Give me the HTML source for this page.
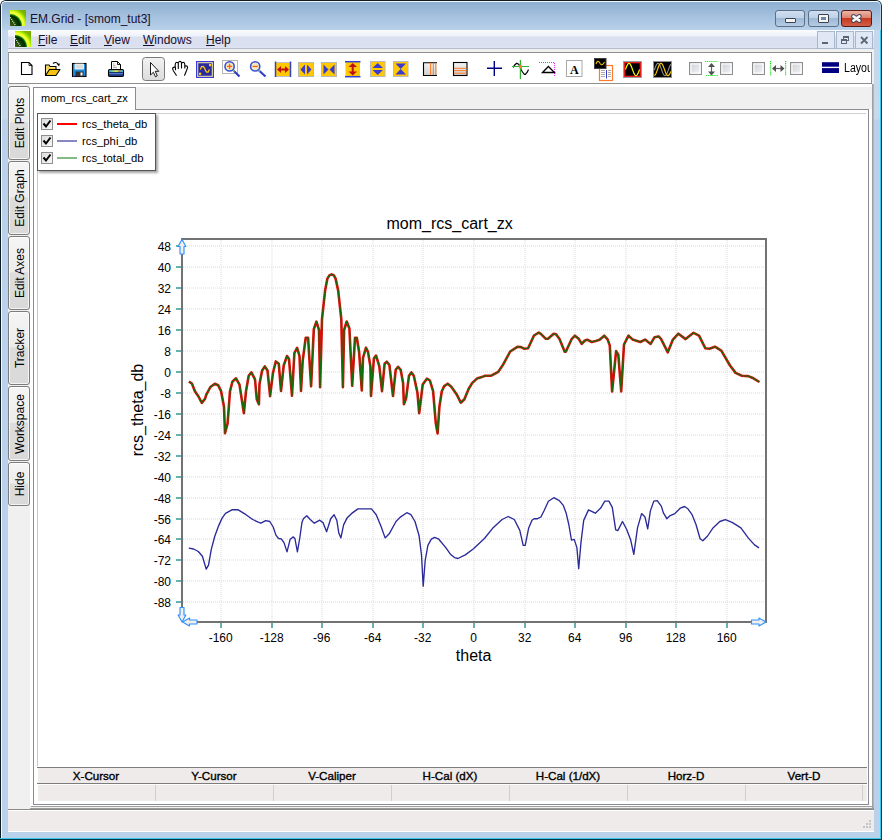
<!DOCTYPE html>
<html><head><meta charset="utf-8"><title>EM.Grid</title>
<style>
*{margin:0;padding:0;box-sizing:border-box}
html,body{width:882px;height:840px;overflow:hidden;background:#fff;font-family:"Liberation Sans",sans-serif}
.a{position:absolute}
.t{position:absolute;white-space:nowrap;line-height:1}
.vt{position:absolute;left:8px;width:22px;border:1px solid #7c7c7c;border-radius:3px;background:linear-gradient(#f5f5f5 0,#ececec 48%,#dddddd 50%,#d9d9d9 100%);box-shadow:inset 0 0 0 1px rgba(255,255,255,0.7)}
.vt span{position:absolute;left:calc(50% + 0.5px);top:50%;transform:translate(-50%,-50%) rotate(-90deg);font-size:12px;color:#000;white-space:nowrap;line-height:1}
.chk{position:absolute;width:12px;height:12px;border:1px solid #8e8f8f;background:linear-gradient(135deg,#dcdcdc,#f8f8f8)}
.tb{position:absolute;top:0}
.hd{position:absolute;top:768.9px;height:13px;width:118px;text-align:center;font-size:11.6px;font-weight:normal;line-height:13px;color:#000;-webkit-text-stroke:0.35px #000}
</style></head><body>

<!-- window frame -->
<div class="a" style="left:0;top:0;width:882px;height:840px;background:#b9d1ea;border:1px solid #101c24;border-right-color:#0a3a4a;border-bottom-color:#0a3a4a;border-radius:6px 6px 0 0"></div>
<div class="a" style="left:1px;top:1px;width:880px;height:838px;border:1px solid #f4f8fc;border-right:0;border-bottom:0;border-radius:5px 5px 0 0"></div>
<div class="a" style="left:2px;top:2px;width:878px;height:28px;background:linear-gradient(#8fb0d1,#b9d1ea);border-radius:4px 4px 0 0"></div>
<div class="a" style="left:2px;top:30px;width:6px;height:802px;background:linear-gradient(#c4d8ed 0,#c6daee 88px,#b9d1ea 91px,#b9d1ea 100%)"></div>
<div class="a" style="left:874px;top:30px;width:6px;height:802px;background:linear-gradient(#c4d8ed 0,#c6daee 88px,#b9d1ea 91px,#b9d1ea 100%)"></div>
<!-- title -->
<div class="a" style="left:10px;top:10px;width:16px;height:16px;background:radial-gradient(circle farthest-corner at 0% 100%,#4a6010 0,#1a4a00 25%,#002a00 44%,#0a7a0a 50%,#e8ff40 55%,#f8ff30 62%,#b0f000 70%,#80b800 80%,#78a800 100%)"></div>
<svg class="a" style="left:0;top:0" width="40" height="50" viewBox="0 0 40 50"><path d="M10.3 17.3 L15.6 25.6" stroke="#f4f4f4" stroke-width="1.1" stroke-dasharray="1.1 0.9" fill="none"/></svg>
<div class="t" style="left:30px;top:13px;font-size:12px;color:#1a0f2e">EM.Grid - [smom_tut3]</div>
<!-- caption buttons -->
<div class="a" style="left:775px;top:10px;width:30px;height:17px;border:1px solid #5d6f86;border-radius:3px;background:linear-gradient(#d1e0f0 0,#bdd1e8 45%,#9fb9d6 50%,#b4cbe3 100%)"></div>
<div class="a" style="left:785px;top:18px;width:11px;height:5px;border:1px solid #3a4350;background:#f4f4f4;border-radius:1px"></div>
<div class="a" style="left:808px;top:10px;width:31px;height:17px;border:1px solid #5d6f86;border-radius:3px;background:linear-gradient(#d1e0f0 0,#bdd1e8 45%,#9fb9d6 50%,#b4cbe3 100%)"></div>
<div class="a" style="left:818px;top:14px;width:11px;height:9px;border:1px solid #3a4350;background:#f4f4f4;border-radius:1px"></div>
<div class="a" style="left:821px;top:17px;width:5px;height:3px;background:#6f86a6"></div>
<div class="a" style="left:841px;top:10px;width:31px;height:17px;border:1px solid #5a1a16;border-radius:3px;background:linear-gradient(#eab5a8 0,#dc8470 45%,#c73a1f 50%,#d06048 100%)"></div>
<svg class="a" style="left:849px;top:12px" width="15" height="13" viewBox="0 0 15 13"><path d="M4.4 4.4 L10.4 8.6 M10.4 4.4 L4.4 8.6" stroke="#3c4454" stroke-width="4.6" stroke-linecap="round"/><path d="M4.4 4.4 L10.4 8.6 M10.4 4.4 L4.4 8.6" stroke="#f6f6f6" stroke-width="2.6" stroke-linecap="round"/></svg>
<!-- client bg -->
<div class="a" style="left:8px;top:30px;width:866px;height:802px;background:#f0f0f0"></div>
<!-- menubar -->
<div class="a" style="left:8px;top:30px;width:866px;height:19px;background:linear-gradient(#fcfcfe 0,#eef1f9 6px,#dbe0f0 7px,#dbe0f0 16px,#e0e5f4 18px);border-bottom:1px solid #b7bccb"></div>
<div class="a" style="left:14px;top:31px;width:1px;height:16px;background:#fbfbff"></div>
<div class="a" style="left:15px;top:31px;width:16px;height:16px;background:radial-gradient(circle farthest-corner at 0% 100%,#4a6010 0,#1a4a00 25%,#002a00 44%,#0a7a0a 50%,#e8ff40 55%,#f8ff30 62%,#b0f000 70%,#80b800 80%,#78a800 100%)"></div>
<svg class="a" style="left:0;top:0" width="40" height="50" viewBox="0 0 40 50"><path d="M15.3 38.3 L20.6 46.6" stroke="#f4f4f4" stroke-width="1.1" stroke-dasharray="1.1 0.9" fill="none"/></svg>
<div class="t" style="left:38px;top:34px;font-size:12px;color:#1a0f2e"><u>F</u>ile</div>
<div class="t" style="left:70px;top:34px;font-size:12px;color:#1a0f2e"><u>E</u>dit</div>
<div class="t" style="left:104px;top:34px;font-size:12px;color:#1a0f2e"><u>V</u>iew</div>
<div class="t" style="left:143px;top:34px;font-size:12px;color:#1a0f2e"><u>W</u>indows</div>
<div class="t" style="left:206px;top:34px;font-size:12px;color:#1a0f2e"><u>H</u>elp</div>
<!-- mdi buttons -->
<div class="a" style="left:817px;top:31px;width:18px;height:18px;border:1px solid #a9b8cc;background:#dfe8f4"></div>
<div class="a" style="left:822px;top:42px;width:6px;height:2px;background:#5b6675"></div>
<div class="a" style="left:836px;top:31px;width:18px;height:18px;border:1px solid #a9b8cc;background:#dfe8f4"></div>
<div class="a" style="left:843px;top:36px;width:6px;height:5px;border:1px solid #5b6675;border-top-width:2px"></div>
<div class="a" style="left:841px;top:38.5px;width:6px;height:5.5px;border:1px solid #5b6675;border-top-width:2px;background:#dfe8f4"></div>
<div class="a" style="left:855px;top:31px;width:18px;height:18px;border:1px solid #a9b8cc;background:#dfe8f4"></div>
<svg class="a" style="left:859px;top:35px" width="10" height="10" viewBox="0 0 10 10"><path d="M2 2 L8.5 8.5 M8.5 2 L2 8.5" stroke="#5b6675" stroke-width="1.8"/></svg>
<!-- toolbar -->
<div class="a" style="left:8px;top:52px;width:864px;height:32px;background:#fff;border:1px solid #8f8f8f;border-left-color:#9a9a9a"></div>

<svg class="a" style="left:0;top:0" width="882" height="86" viewBox="0 0 882 86">
<defs>
<linearGradient id="cbg" x1="0" y1="0" x2="1" y2="1"><stop offset="0" stop-color="#c9ced6"/><stop offset="1" stop-color="#f6f6f6"/></linearGradient>
<linearGradient id="btg" x1="0" y1="0" x2="0" y2="1"><stop offset="0" stop-color="#f2f2f2"/><stop offset="1" stop-color="#dcdcdc"/></linearGradient>
<linearGradient id="lbg" x1="0" y1="0" x2="0" y2="1"><stop offset="0" stop-color="#f4f4f4"/><stop offset="1" stop-color="#cfcfcf"/></linearGradient>
</defs>
<!-- new doc -->
<path d="M21.5 62.5 H29 L32 65.5 V74.5 H21.5 Z" fill="#fff" stroke="#000" stroke-width="1.1"/>
<path d="M29 62.5 V65.5 H32" fill="none" stroke="#000" stroke-width="0.8"/>
<!-- open folder -->
<path d="M45.5 75.5 V65 H49 L50 66.5 H56 V69.5" fill="#fde890" stroke="#000" stroke-width="1.1"/>
<path d="M46.5 66.5 H49 L50 68 H55 V69.5 H46.5 Z" fill="#f8d040"/>
<path d="M45.5 75.5 H56 L60 69.5 H49.5 Z" fill="#f7c20f" stroke="#000" stroke-width="1.1" stroke-linejoin="round"/>
<path d="M53 63.5 Q56 61 58.5 64.5" fill="none" stroke="#000" stroke-width="1.1"/>
<path d="M57 64 L60 63.5 L59 66.5 Z" fill="#000"/>
<!-- save -->
<rect x="72.5" y="63.5" width="13.5" height="13" fill="#1d8fe0" stroke="#000" stroke-width="1.1"/>
<rect x="75" y="64" width="8.5" height="5" fill="#dcdcdc" stroke="#fff" stroke-width="0.8"/>
<rect x="75.5" y="71.5" width="8" height="5" fill="#333"/>
<rect x="80.5" y="72.5" width="2" height="3" fill="#fff"/>
<rect x="73" y="75" width="2" height="1.5" fill="#5050e0"/>
<!-- print -->
<path d="M111.5 61.5 H117.5 L120.5 64.5 V69.5 H111.5 Z" fill="#f8f8f8" stroke="#000" stroke-width="1"/>
<path d="M117.5 61.5 V64.5 H120.5" fill="none" stroke="#000" stroke-width="0.9"/>
<path d="M113 64 H114.5 M113 65.8 H115.5 M113 67.6 H117" stroke="#909090" stroke-width="0.8"/>
<rect x="108.5" y="69.5" width="15" height="7" rx="1.2" fill="#2a50c0" stroke="#000" stroke-width="1.1"/>
<linearGradient id="prg" x1="0" y1="0" x2="1" y2="0"><stop offset="0" stop-color="#20b0f0"/><stop offset="0.5" stop-color="#d8e838"/><stop offset="1" stop-color="#20c0f0"/></linearGradient>
<rect x="109.2" y="70.2" width="13.6" height="1.9" fill="url(#prg)"/>
<rect x="109.2" y="72.1" width="13.6" height="0.8" fill="#102040"/>
<rect x="109.2" y="72.9" width="13.6" height="1.7" fill="#4a78d8"/>
<rect x="109.2" y="74.6" width="13.6" height="0.8" fill="#101830"/>
<rect x="118.5" y="70.4" width="2" height="1.3" fill="#ff3030"/>
<!-- pointer button -->
<rect x="142.5" y="57.5" width="22" height="23" rx="3" fill="url(#btg)" stroke="#7a7a7a" stroke-width="1"/>
<path d="M150.5 62.5 V75 L153.3 72.3 L155.5 76.8 L157.3 75.8 L155.2 71.3 H158.8 Z" fill="#fff" stroke="#000" stroke-width="0.9" stroke-linejoin="miter"/>
<!-- hand -->
<path d="M176.3 75.3 L173.5 71 Q172 68.5 173.2 67.5 Q174.5 66.8 175.5 67.5 V69.8 M175.2 67.5 V64.5 Q175.3 62.3 176.8 62.3 Q178.3 62.5 178.3 64 V68.5 M178.3 63.5 Q178.5 61.3 180 61.3 Q181.5 61.5 181.5 63.5 V68 M181.5 64 Q181.8 62.2 183.2 62.2 Q184.8 62.4 184.8 64.5 V68 M185 66 Q187.3 65.6 187.6 67 Q187.5 68.5 186.5 70.5 L185.5 73 L184.6 75.3" fill="none" stroke="#000" stroke-width="1.1" stroke-linecap="round" stroke-linejoin="round"/>
<!-- wave box -->
<rect x="196.5" y="61.5" width="17" height="16" fill="#2a2a9e" stroke="#3a3ad8" stroke-width="1"/>
<rect x="197.7" y="62.7" width="14.6" height="13.6" fill="none" stroke="#efe2a8" stroke-width="1.1"/>
<polyline points="200.3,69.5 201.6,66.6 203.2,66.4 204.5,67.8 205.5,70.6 206.6,72.1 208.1,72.1 209.4,69.5" fill="none" stroke="#ffd000" stroke-width="1.2"/>
<rect x="199" y="72.7" width="2.2" height="2.2" fill="#ffd800"/>
<rect x="209" y="64" width="2.2" height="2.2" fill="#ffd800"/>
<!-- zoom in -->
<rect x="222.5" y="60.5" width="15" height="13" fill="none" stroke="#b5b5b5" stroke-width="1"/>
<line x1="233.5" y1="70.5" x2="239.5" y2="76.5" stroke="#3040c0" stroke-width="2.2"/>
<line x1="232.5" y1="69.5" x2="234.5" y2="71.5" stroke="#a0d040" stroke-width="1.5"/>
<circle cx="229.6" cy="66.4" r="4.6" fill="#f3e8c0" stroke="#3a50d8" stroke-width="1.6"/>
<path d="M229.6 63.8 V69 M227 66.4 H232.2" stroke="#ff6010" stroke-width="1.3"/>
<!-- zoom out -->
<line x1="259" y1="70.5" x2="265.5" y2="76.5" stroke="#3040c0" stroke-width="2.2"/>
<line x1="258.2" y1="69.5" x2="260" y2="71.3" stroke="#a0d040" stroke-width="1.5"/>
<circle cx="255.2" cy="66.4" r="4.6" fill="#f3e8c0" stroke="#3a50d8" stroke-width="1.6"/>
<path d="M252.6 66.4 H257.8" stroke="#ff6010" stroke-width="1.3"/>
<!-- yellow box 1 -->
<rect x="275.5" y="62.5" width="15" height="14" fill="#ffc800" stroke="#c0c0c0" stroke-width="1"/>
<line x1="275.5" y1="61.5" x2="275.5" y2="77" stroke="#3040d0" stroke-width="1.5"/>
<line x1="290.5" y1="61.5" x2="290.5" y2="77" stroke="#3040d0" stroke-width="1.5"/>
<path d="M277 69.5 L281 66 V68.5 H285 V66 L289 69.5 L285 73 V70.5 H281 V73 Z" fill="#c01010"/>
<!-- box 2 -->
<rect x="298.5" y="62.5" width="15" height="14" fill="#ffc800" stroke="#b8b8b8" stroke-width="1"/>
<path d="M305 64.5 L300.5 69.5 L305 74.5 Z M307 64.5 L311.5 69.5 L307 74.5 Z" fill="#3a3ad0"/>
<!-- box 3 -->
<rect x="321.5" y="62.5" width="15" height="14" fill="#ffc800" stroke="#b8b8b8" stroke-width="1"/>
<path d="M323.5 64.5 L328.5 69.5 L323.5 74.5 Z M334.5 64.5 L329.5 69.5 L334.5 74.5 Z" fill="#3a3ad0"/>
<!-- box 4 -->
<rect x="345.5" y="62" width="14.5" height="14.5" fill="#ffc800"/>
<line x1="345" y1="61.7" x2="360.5" y2="61.7" stroke="#3040d0" stroke-width="1.5"/>
<line x1="345" y1="76.7" x2="360.5" y2="76.7" stroke="#3040d0" stroke-width="1.5"/>
<path d="M352.7 63 L357 67 H353.7 V71.5 H357 L352.7 75.5 L348.5 71.5 H351.7 V67 H348.5 Z" fill="#c01010"/>
<!-- box 5 -->
<rect x="370.5" y="61.5" width="14.5" height="15" fill="#ffc800" stroke="#b8b8b8" stroke-width="1"/>
<path d="M377.7 63 L383 68 H372.5 Z M372.5 70 H383 L377.7 75 Z" fill="#3a3ad0"/>
<!-- box 6 -->
<rect x="393.5" y="61.5" width="14.5" height="15" fill="#ffc800" stroke="#b8b8b8" stroke-width="1"/>
<path d="M395.5 63.5 H406 L400.7 69 L406 74.5 H395.5 L400.7 69 Z" fill="#3a3ad0"/>
<!-- vlines box -->
<rect x="423" y="62.5" width="14" height="13" fill="url(#lbg)"/>
<path d="M423 62.7 H437 M423 75.5 H437 M423.5 62.5 V76" stroke="#000" stroke-width="1.1" fill="none"/>
<path d="M430.6 63 V75 M433.3 63 V75 M435.8 63 V75" stroke="#ff7a20" stroke-width="1"/>
<!-- hlines box -->
<rect x="453.5" y="62.5" width="13.5" height="13" fill="url(#lbg)" stroke="#000" stroke-width="1.1"/>
<path d="M454 68.3 H466.5 M454 70.6 H466.5 M454 73.2 H466.5" stroke="#ff7a20" stroke-width="1"/>
<!-- crosshair -->
<path d="M494.3 61 V76 M487 68.3 H502" stroke="#000080" stroke-width="1.4"/>
<!-- green cursor -->
<polyline points="513.3,67.6 514.5,65.2 516.6,63.3 518.6,64.3 519.6,65.9 520.4,67.5 521.3,70 522.5,72 524.4,74.4 525.4,74.4 527.4,72 528.5,69.6" fill="none" stroke="#000" stroke-width="1.2"/>
<path d="M520.4 60 V79 M512 66.5 H529" stroke="#30b030" stroke-width="1.2"/>
<rect x="519" y="65.2" width="3" height="3" fill="#ff8020"/>
<!-- triangle -->
<path d="M539 62.5 H554.5 V77" fill="none" stroke="#ff20ff" stroke-width="1" stroke-dasharray="1 1" shape-rendering="crispEdges"/>
<path d="M542.5 72.5 L548.4 66.5 L554.5 72.5 Z" fill="#fff" stroke="#000" stroke-width="1.3" stroke-linejoin="miter"/>
<!-- A box -->
<rect x="566.5" y="60.5" width="15.5" height="16" fill="#fff" stroke="#a8a8a8" stroke-width="1"/>
<text x="574.3" y="73.5" font-family="Liberation Serif" font-weight="bold" font-size="12" text-anchor="middle" fill="#000">A</text>
<!-- doc wave -->
<rect x="599.5" y="65.5" width="13" height="15" fill="#fff" stroke="#ff7a30" stroke-width="1.2"/>
<path d="M601 70.5 H605 M601 72.5 H605 M601 74.5 H605 M601 76.5 H605 M608 70.5 H611 M608 72.5 H611 M608 74.5 H611 M608 76.5 H611" stroke="#a8a8a8" stroke-width="1" shape-rendering="crispEdges"/>
<line x1="606.5" y1="70" x2="606.5" y2="78.5" stroke="#3a3ad0" stroke-width="1"/>
<rect x="594.5" y="58.5" width="11.5" height="10" fill="#000" stroke="#404040" stroke-width="1"/>
<path d="M596 64 Q597.5 59.5 599.5 62.5 Q601.5 66.5 603.5 63.5 L604.5 62" fill="none" stroke="#f0c000" stroke-width="1.1"/>
<!-- red wave -->
<rect x="623.5" y="61.5" width="18" height="16" fill="#000" stroke="#98a0a0" stroke-width="1"/>
<rect x="624.7" y="62.7" width="15.6" height="13.6" fill="none" stroke="#ff2020" stroke-width="1.2"/>
<polyline points="625.5,69.5 626.0,68.1 626.5,66.8 627.0,65.6 627.5,64.7 628.0,63.9 628.5,63.5 629.0,63.3 629.5,63.5 630.0,63.9 630.5,64.7 631.0,65.6 631.5,66.8 632.0,68.1 632.5,69.5 633.0,70.9 633.5,72.2 634.0,73.4 634.5,74.3 635.0,75.1 635.5,75.5 636.0,75.7 636.5,75.5 637.0,75.1 637.5,74.3 638.0,73.4 638.5,72.2 639.0,70.9 639.5,69.5" fill="none" stroke="#ffff00" stroke-width="1.2"/>
<!-- double wave -->
<rect x="653.5" y="61.5" width="18" height="16" fill="#000" stroke="#909090" stroke-width="1"/>
<polyline points="654.3,70.1 654.8,68.7 655.3,67.3 655.8,66.1 656.3,65.0 656.8,64.2 657.3,63.6 657.8,63.3 658.3,63.4 658.8,63.7 659.3,64.3 659.8,65.2 660.3,66.3 660.8,67.6 661.3,68.9 661.8,70.3 662.3,71.7 662.8,72.9 663.3,74.0 663.8,74.8 664.3,75.4 664.8,75.7 665.3,75.6 665.8,75.3 666.3,74.7 666.8,73.8 667.3,72.7 667.8,71.4 668.3,70.1 668.8,68.7 669.3,67.3 669.8,66.1 670.3,65.0 670.8,64.2" fill="none" stroke="#909090" stroke-width="1.1"/>
<polyline points="654.3,75.6 654.8,75.3 655.3,74.7 655.8,73.8 656.3,72.7 656.8,71.4 657.3,70.1 657.8,68.7 658.3,67.3 658.8,66.1 659.3,65.0 659.8,64.2 660.3,63.6 660.8,63.3 661.3,63.4 661.8,63.7 662.3,64.3 662.8,65.2 663.3,66.3 663.8,67.6 664.3,68.9 664.8,70.3 665.3,71.7 665.8,72.9 666.3,74.0 666.8,74.8 667.3,75.4 667.8,75.7 668.3,75.6 668.8,75.3 669.3,74.7 669.8,73.8 670.3,72.7 670.8,71.4" fill="none" stroke="#f8c800" stroke-width="1.2"/>
<!-- checkboxes -->
<g fill="url(#cbg)" stroke="#8e8e8e" stroke-width="1">
<rect x="689.5" y="62.5" width="12" height="12"/>
<rect x="720.5" y="62.5" width="12" height="12"/>
<rect x="752.5" y="62.5" width="12" height="12"/>
<rect x="790.5" y="62.5" width="12" height="12"/>
</g>
<g fill="none" stroke="#fff" stroke-width="1">
<rect x="691" y="64" width="9" height="9"/>
<rect x="722" y="64" width="9" height="9"/>
<rect x="754" y="64" width="9" height="9"/>
<rect x="792" y="64" width="9" height="9"/>
</g>
<!-- v arrow -->
<path d="M705 61.5 H718 M706 75.5 H718" stroke="#20e020" stroke-width="1.2" stroke-dasharray="1.2 0.9"/>
<path d="M711.5 64 V74.5" stroke="#606060" stroke-width="1.2"/>
<path d="M708 67 L711.5 63 L715 67 Z M708 71.5 L711.5 75.5 L715 71.5 Z" fill="#505050"/>
<!-- h arrow -->
<path d="M770.5 61 V76 M785.6 61 V76" stroke="#20e020" stroke-width="1.2" stroke-dasharray="1.2 0.9"/>
<path d="M773 68.5 H783.5" stroke="#606060" stroke-width="1.2"/>
<path d="M776 65 L772 68.5 L776 72 Z M780.5 65 L784.5 68.5 L780.5 72 Z" fill="#505050"/>
<!-- layout -->
<rect x="822" y="62.2" width="17" height="10.8" fill="#000080"/>
<rect x="822" y="66.7" width="17" height="1.4" fill="#fff"/>
</svg>
<div class="a" style="left:843.5px;top:61px;width:26.5px;height:16px;overflow:hidden"><div class="t" style="left:0;top:1.3px;font-size:12.3px;color:#000;transform:scaleX(0.86);transform-origin:0 0">Layout</div></div>

<!-- left tabs -->
<div class="vt" style="top:86px;height:74px"><span>Edit Plots</span></div>
<div class="vt" style="top:161px;height:74px"><span>Edit Graph</span></div>
<div class="vt" style="top:236px;height:74px"><span>Edit Axes</span></div>
<div class="vt" style="top:311px;height:74px"><span>Tracker</span></div>
<div class="vt" style="top:386px;height:75px"><span>Workspace</span></div>
<div class="vt" style="top:462px;height:44px"><span>Hide</span></div>
<!-- mdi area -->
<div class="a" style="left:30px;top:84px;width:842px;height:722px;background:#fff"></div>
<div class="a" style="left:872px;top:84px;width:1px;height:724px;background:#a0a0a0"></div>
<div class="a" style="left:873px;top:84px;width:1px;height:724px;background:#b4b4b4"></div>
<div class="a" style="left:31px;top:806px;width:843px;height:1px;background:#a0a0a0"></div>
<div class="a" style="left:8px;top:809px;width:866px;height:1px;background:#8a8a8a"></div>
<div class="a" style="left:30px;top:808px;width:844px;height:1px;background:#9a9a9a"></div>
<!-- tab strip -->
<div class="a" style="left:136px;top:87px;width:736px;height:22px;background:#f0f0f0"></div>
<div class="a" style="left:33px;top:87px;width:103px;height:23px;border:1px solid #898c95;border-bottom:0;background:#fff"></div>
<div class="t" style="left:41px;top:93px;font-size:11px;color:#000">mom_rcs_cart_zx</div>
<div class="a" style="left:33px;top:109px;width:836px;height:696px;border:1px solid #898c95;border-top:0"></div>
<div class="a" style="left:135px;top:109px;width:734px;height:1px;background:#898c95"></div>
<!-- graph panel lines -->
<div class="a" style="left:37px;top:113px;width:829px;height:1px;background:#d0d0d0"></div>
<div class="a" style="left:37px;top:113px;width:1px;height:653px;background:#c8c8c8"></div>
<!-- legend -->
<div class="a" style="left:39px;top:115px;width:119px;height:58px;background:rgba(0,0,0,0.35);filter:blur(1px)"></div>
<div class="a" style="left:37px;top:113px;width:119px;height:58px;background:#fff;border:1px solid #555"></div>
<div class="chk" style="left:41px;top:118px"></div>
<div class="chk" style="left:41px;top:135px"></div>
<div class="chk" style="left:41px;top:152px"></div>
<svg class="a" style="left:0;top:0" width="170" height="175" viewBox="0 0 170 175">
<path d="M43.5 123.5 L46 126.5 L50.5 120.5 M43.5 140.5 L46 143.5 L50.5 137.5 M43.5 157.5 L46 160.5 L50.5 154.5" fill="none" stroke="#000" stroke-width="2"/>
<line x1="57" y1="124" x2="77" y2="124" stroke="#ff0000" stroke-width="2"/>
<line x1="57" y1="141" x2="77" y2="141" stroke="#6a6ab8" stroke-width="1.6"/>
<line x1="57" y1="158" x2="77" y2="158" stroke="#66aa66" stroke-width="1.6"/>
</svg>
<div class="t" style="left:82px;top:119px;font-size:11.3px;color:#000">rcs_theta_db</div>
<div class="t" style="left:82px;top:136px;font-size:11.3px;color:#000">rcs_phi_db</div>
<div class="t" style="left:82px;top:153px;font-size:11.3px;color:#000">rcs_total_db</div>

<svg class="a" style="left:0;top:0" width="882" height="840" viewBox="0 0 882 840">
<path d="M221 240 V621 M272 240 V621 M322 240 V621 M373 240 V621 M423 240 V621 M474 240 V621 M525 240 V621 M575 240 V621 M626 240 V621 M676 240 V621 M727 240 V621 M183 246 H765 M183 267 H765 M183 288 H765 M183 309 H765 M183 330 H765 M183 351 H765 M183 372 H765 M183 393 H765 M183 414 H765 M183 435 H765 M183 456 H765 M183 477 H765 M183 498 H765 M183 519 H765 M183 539 H765 M183 560 H765 M183 581 H765 M183 602 H765" stroke="#e6e6e6" stroke-width="1.5" stroke-dasharray="1 1" fill="none"/>
<path d="M221 623 V628 M272 623 V628 M322 623 V628 M373 623 V628 M423 623 V628 M474 623 V628 M525 623 V628 M575 623 V628 M626 623 V628 M676 623 V628 M727 623 V628 M176 246 H181 M176 267 H181 M176 288 H181 M176 309 H181 M176 330 H181 M176 351 H181 M176 372 H181 M176 393 H181 M176 414 H181 M176 435 H181 M176 456 H181 M176 477 H181 M176 498 H181 M176 519 H181 M176 539 H181 M176 560 H181 M176 581 H181 M176 602 H181" stroke="#66b0ae" stroke-width="2" fill="none" shape-rendering="crispEdges"/>
<polyline points="188.8,548.1 193.6,549 198.3,551.5 202.4,556.2 206.2,569.1 208.5,565.1 211.3,549.4 214.7,536.5 218.7,525.6 222.1,518.1 225.5,513.4 232.3,509.7 237.8,509.7 246,514.7 252.7,519.5 258.2,522.2 260.9,523.2 265.7,520.6 269.8,521.5 273.2,527 275.9,535.1 278.6,538.5 281.3,538.8 284,542.6 287,551.9 290.2,539.2 293.3,536.9 294.9,538.5 297.4,551.9 299.7,538.5 302,522.2 303.4,518.8 306.8,515.7 310.2,519.5 314.3,523.2 319.8,520.2 323.2,522.9 326.6,531.7 330.7,518.8 334.1,514.7 336.8,520.2 338.8,533.1 340.9,537.9 343.6,524.9 347,518.1 351.7,513.4 357.9,508.9 371.5,508.9 376.2,514.7 381,526.3 385.1,537.9 389.2,533.8 396,521.5 400,517.4 406.8,512.7 410.9,514.7 415,521.5 419.1,535.8 421.5,554.9 423.2,586.2 425.2,560.3 427.9,545.3 431.3,539.2 434.7,537.4 438.8,539.2 445.6,547.4 450.4,554.2 454.5,557.6 457.9,558.5 465.3,554.9 473.5,548.7 484.4,538.5 492.6,528.3 502.1,519.5 508.2,516.5 514.3,519.5 519.8,530.4 523.2,545.3 525.2,545.3 528.6,528.3 532,520.2 534.1,518.7 537.5,518.7 540.9,517 544.3,510.2 548.4,501.3 553.8,497.7 559.3,500.6 563.3,505.4 566.1,512.9 568.8,524.5 571.5,540.1 574.2,539.4 576.9,547.6 578.7,568.7 581,542.1 583.7,520.4 588.5,509.9 595.3,513.2 600.7,508.1 604.8,501.1 608.9,501.1 612.3,507.4 615.7,529.9 617.8,530.6 622.5,521.5 626.6,529.2 630.7,540.1 633.8,554.4 637.5,527.9 641.6,513.6 645,517 647.7,528.8 650.4,510.9 653.8,501.1 657.2,500.6 661.3,506.1 663.4,512.9 666.8,518.7 670.2,515.6 674.9,513.6 680.4,508.1 684.5,506.5 687.9,508.8 691.9,514.3 696,524.5 700.1,538.7 702.8,540.8 707.6,536 713,527.9 719.8,521.5 725.3,519.7 732.1,522.4 740.9,527.9 748.4,538.1 754.5,544.9 759,547.9" fill="none" stroke="#2a2a9a" stroke-width="1.35" stroke-linejoin="round"/>
<polyline points="188.9,381.7 191.9,383.5 194.9,391.2 198.5,396.5 201.8,402.9 205,398.9 206.2,394.8 210.4,387 214.9,383.8 218.1,385.2 221.1,391.2 224,406.7 225,433.2 227.6,423.3 230,391.2 232.4,381.7 236,378.3 239.5,384.6 243.9,413.2 246,391.2 248.7,375.7 251.4,372.4 255,379.3 256.8,399.5 258.9,404.3 259.5,384 262.1,370.4 264.8,366.4 267.5,370.4 270.1,396.2 272.9,373.3 275.8,361.4 278.8,363.8 281,391 283.7,365.5 287,356 289,358.9 292,395.8 294.4,353 297.1,347.9 299.5,356 301,391 302.7,360.7 305.7,337.9 308.1,337.9 311.1,386.3 313.8,329.2 316.4,321.7 319,329.8 320.1,387.3 322,319.2 325.1,290.6 327.4,278.6 329.4,275.4 331.7,274.3 333.9,275.4 335.6,278.6 338.2,290.6 341.3,319.2 342.9,387.3 344.1,330 346.7,321.5 349.4,328.5 352.2,385.8 355,337.8 356.8,337.8 359.1,351.7 361.8,390.4 363,357.9 366,347.7 368,351.9 370.4,366.2 371,396 373.9,358.5 376,355.5 379.3,366.2 382,391.2 384.6,363.8 386.8,361.7 389.4,365 393,396 395.7,369.8 398.1,366.8 400.7,369.8 403.1,382.9 403.9,404.3 406.1,398.3 409,375.7 411.4,372.4 413.8,375.7 417.4,392.4 419.2,413.2 422.7,384.6 426.9,378.7 429.9,380.5 433.1,391.2 435.8,423.3 437.6,433.5 439.4,406.7 441.8,391.2 444.2,386.1 447.7,383.7 451.3,386.7 456.7,394.4 460.8,402.7 464.4,399.2 468.6,389 472.1,383.1 476.9,378.6 481.7,377.1 485.2,375.7 491.2,375.7 498.3,371.8 503.1,364.6 510.2,351.5 517.4,346.8 521,347.1 524.5,348.8 528.1,348.3 534,335.5 538.8,332.5 541.8,334.8 545.8,338.8 548,338.8 553.7,333.7 556,334.3 559.4,338.8 564.7,351.8 565.8,351.8 571.8,338.8 574.9,335.7 578.7,338.8 581.7,343.9 584.9,340.5 587.2,339.7 591.7,342 595.7,340.9 599.6,339.7 604.2,335.7 607.6,339.4 609.8,345.6 612.1,391.5 616.1,351.1 618.3,354.7 621.2,391.5 624,344.5 628.5,335.7 632.5,339.4 640.3,342 645.1,339.6 650.6,343.9 654.6,337.2 658.6,336.4 661,338.8 667.8,352.3 672.9,339.6 678.4,333.7 685.6,339.1 693.5,332.8 699,335.6 705.4,348.3 709.4,348.7 714.9,346.7 721.3,350.7 730,365.5 735.6,372.9 741.9,375.8 748.3,376.1 752.2,377.7 759.4,382" fill="none" stroke="#e80a0a" stroke-width="2.6" stroke-linejoin="round"/>
<polyline points="188.9,381.7 191.9,383.5 194.9,391.2 198.5,396.5 201.8,402.9 205,398.9 206.2,394.8 210.4,387 214.9,383.8 218.1,385.2 221.1,391.2 224,406.7 225,433.2 227.6,423.3 230,391.2 232.4,381.7 236,378.3 239.5,384.6 243.9,413.2 246,391.2 248.7,375.7 251.4,372.4 255,379.3 256.8,399.5 258.9,404.3 259.5,384 262.1,370.4 264.8,366.4 267.5,370.4 270.1,396.2 272.9,373.3 275.8,361.4 278.8,363.8 281,391 283.7,365.5 287,356 289,358.9 292,395.8 294.4,353 297.1,347.9 299.5,356 301,391 302.7,360.7 305.7,337.9 308.1,337.9 311.1,386.3 313.8,329.2 316.4,321.7 319,329.8 320.1,387.3 322,319.2 325.1,290.6 327.4,278.6 329.4,275.4 331.7,274.3 333.9,275.4 335.6,278.6 338.2,290.6 341.3,319.2 342.9,387.3 344.1,330 346.7,321.5 349.4,328.5 352.2,385.8 355,337.8 356.8,337.8 359.1,351.7 361.8,390.4 363,357.9 366,347.7 368,351.9 370.4,366.2 371,396 373.9,358.5 376,355.5 379.3,366.2 382,391.2 384.6,363.8 386.8,361.7 389.4,365 393,396 395.7,369.8 398.1,366.8 400.7,369.8 403.1,382.9 403.9,404.3 406.1,398.3 409,375.7 411.4,372.4 413.8,375.7 417.4,392.4 419.2,413.2 422.7,384.6 426.9,378.7 429.9,380.5 433.1,391.2 435.8,423.3 437.6,433.5 439.4,406.7 441.8,391.2 444.2,386.1 447.7,383.7 451.3,386.7 456.7,394.4 460.8,402.7 464.4,399.2 468.6,389 472.1,383.1 476.9,378.6 481.7,377.1 485.2,375.7 491.2,375.7 498.3,371.8 503.1,364.6 510.2,351.5 517.4,346.8 521,347.1 524.5,348.8 528.1,348.3 534,335.5 538.8,332.5 541.8,334.8 545.8,338.8 548,338.8 553.7,333.7 556,334.3 559.4,338.8 564.7,351.8 565.8,351.8 571.8,338.8 574.9,335.7 578.7,338.8 581.7,343.9 584.9,340.5 587.2,339.7 591.7,342 595.7,340.9 599.6,339.7 604.2,335.7 607.6,339.4 609.8,345.6 612.1,391.5 616.1,351.1 618.3,354.7 621.2,391.5 624,344.5 628.5,335.7 632.5,339.4 640.3,342 645.1,339.6 650.6,343.9 654.6,337.2 658.6,336.4 661,338.8 667.8,352.3 672.9,339.6 678.4,333.7 685.6,339.1 693.5,332.8 699,335.6 705.4,348.3 709.4,348.7 714.9,346.7 721.3,350.7 730,365.5 735.6,372.9 741.9,375.8 748.3,376.1 752.2,377.7 759.4,382" fill="none" stroke="#0a700a" stroke-width="1.15" stroke-linejoin="round"/>
<path d="M182 607 V239 H766 V622 H751 M197 622 H751" stroke="#727272" stroke-width="2" fill="none" stroke-linecap="square"/>
<path d="M0 0 L3.9 7 H2 V14.5 H-2 V7 H-3.9 Z" transform="translate(182 239.5)" fill="#f2efea" stroke="#2f92ff" stroke-width="1.15" stroke-linejoin="round"/>
<path d="M0 0 L3.9 7 H2 V14.5 H-2 V7 H-3.9 Z" transform="translate(182 622) rotate(180)" fill="#f2efea" stroke="#2f92ff" stroke-width="1.15" stroke-linejoin="round"/>
<path d="M0 0 L3.9 7 H2 V14.5 H-2 V7 H-3.9 Z" transform="translate(182.5 622) rotate(-90)" fill="#f2efea" stroke="#2f92ff" stroke-width="1.15" stroke-linejoin="round"/>
<path d="M0 0 L3.9 7 H2 V14.5 H-2 V7 H-3.9 Z" transform="translate(766 622) rotate(90)" fill="#f2efea" stroke="#2f92ff" stroke-width="1.15" stroke-linejoin="round"/>
<g font-family="Liberation Sans" font-size="12" fill="#000"><text transform="translate(171 250.8) scale(1 1.11)" text-anchor="end">48</text><text transform="translate(171 271.8) scale(1 1.11)" text-anchor="end">40</text><text transform="translate(171 292.8) scale(1 1.11)" text-anchor="end">32</text><text transform="translate(171 313.8) scale(1 1.11)" text-anchor="end">24</text><text transform="translate(171 334.8) scale(1 1.11)" text-anchor="end">16</text><text transform="translate(171 355.8) scale(1 1.11)" text-anchor="end">8</text><text transform="translate(171 376.8) scale(1 1.11)" text-anchor="end">0</text><text transform="translate(171 397.8) scale(1 1.11)" text-anchor="end">-8</text><text transform="translate(171 418.8) scale(1 1.11)" text-anchor="end">-16</text><text transform="translate(171 439.8) scale(1 1.11)" text-anchor="end">-24</text><text transform="translate(171 460.8) scale(1 1.11)" text-anchor="end">-32</text><text transform="translate(171 481.8) scale(1 1.11)" text-anchor="end">-40</text><text transform="translate(171 502.8) scale(1 1.11)" text-anchor="end">-48</text><text transform="translate(171 523.8) scale(1 1.11)" text-anchor="end">-56</text><text transform="translate(171 543.8) scale(1 1.11)" text-anchor="end">-64</text><text transform="translate(171 564.8) scale(1 1.11)" text-anchor="end">-72</text><text transform="translate(171 585.8) scale(1 1.11)" text-anchor="end">-80</text><text transform="translate(171 606.8) scale(1 1.11)" text-anchor="end">-88</text><text transform="translate(220.7 641.9) scale(1 1.11)" text-anchor="middle">-160</text><text transform="translate(271.7 641.9) scale(1 1.11)" text-anchor="middle">-128</text><text transform="translate(321.7 641.9) scale(1 1.11)" text-anchor="middle">-96</text><text transform="translate(372.7 641.9) scale(1 1.11)" text-anchor="middle">-64</text><text transform="translate(422.7 641.9) scale(1 1.11)" text-anchor="middle">-32</text><text transform="translate(473.7 641.9) scale(1 1.11)" text-anchor="middle">0</text><text transform="translate(524.7 641.9) scale(1 1.11)" text-anchor="middle">32</text><text transform="translate(574.7 641.9) scale(1 1.11)" text-anchor="middle">64</text><text transform="translate(625.7 641.9) scale(1 1.11)" text-anchor="middle">96</text><text transform="translate(675.7 641.9) scale(1 1.11)" text-anchor="middle">128</text><text transform="translate(726.7 641.9) scale(1 1.11)" text-anchor="middle">160</text></g>
<g font-family="Liberation Sans" font-size="16" fill="#000">
<text x="449.6" y="228.7" text-anchor="middle">mom_rcs_cart_zx</text>
<text x="473.6" y="661.1" text-anchor="middle">theta</text>
<text transform="translate(142.7 410) rotate(-90)" text-anchor="middle">rcs_theta_db</text>
</g>
</svg>
<!-- status table -->
<div class="a" style="left:37px;top:767px;width:830px;height:1px;background:#7c7c7c"></div>
<div class="a" style="left:38px;top:768px;width:829px;height:15px;background:#efebea"></div>
<div class="a" style="left:37px;top:783px;width:830px;height:1px;background:#7c7c7c"></div>
<div class="a" style="left:38px;top:785px;width:829px;height:16px;background:#efebea"></div>
<div class="hd" style="left:37px">X-Cursor</div>
<div class="hd" style="left:155px">Y-Cursor</div>
<div class="hd" style="left:273px">V-Caliper</div>
<div class="hd" style="left:391px">H-Cal (dX)</div>
<div class="hd" style="left:509px">H-Cal (1/dX)</div>
<div class="hd" style="left:627px">Horz-D</div>
<div class="hd" style="left:745px">Vert-D</div>
<div class="a" style="left:155px;top:785px;width:1px;height:16px;background:#cfcfcf"></div>
<div class="a" style="left:273px;top:785px;width:1px;height:16px;background:#cfcfcf"></div>
<div class="a" style="left:391px;top:785px;width:1px;height:16px;background:#cfcfcf"></div>
<div class="a" style="left:509px;top:785px;width:1px;height:16px;background:#cfcfcf"></div>
<div class="a" style="left:627px;top:785px;width:1px;height:16px;background:#cfcfcf"></div>
<div class="a" style="left:745px;top:785px;width:1px;height:16px;background:#cfcfcf"></div>
<div class="a" style="left:862px;top:785px;width:1px;height:16px;background:#cfcfcf"></div>
<!-- status bar -->
<div class="a" style="left:8px;top:810px;width:866px;height:22px;background:#efebea;border-top:1px solid #fff;border-bottom:1px solid #fff"></div>
<div class="a" style="left:0;top:838px;width:881px;height:1px;background:#38c8e8"></div>
<div class="a" style="left:880px;top:30px;width:1px;height:809px;background:#38c8e8"></div>
<svg class="a" style="left:860px;top:818px" width="13" height="13" viewBox="0 0 13 13"><g fill="#c4c4c4"><rect x="9" y="2" width="2" height="2"/><rect x="6" y="5" width="2" height="2"/><rect x="9" y="5" width="2" height="2"/><rect x="3" y="8" width="2" height="2"/><rect x="6" y="8" width="2" height="2"/><rect x="9" y="8" width="2" height="2"/></g></svg>
</body></html>
